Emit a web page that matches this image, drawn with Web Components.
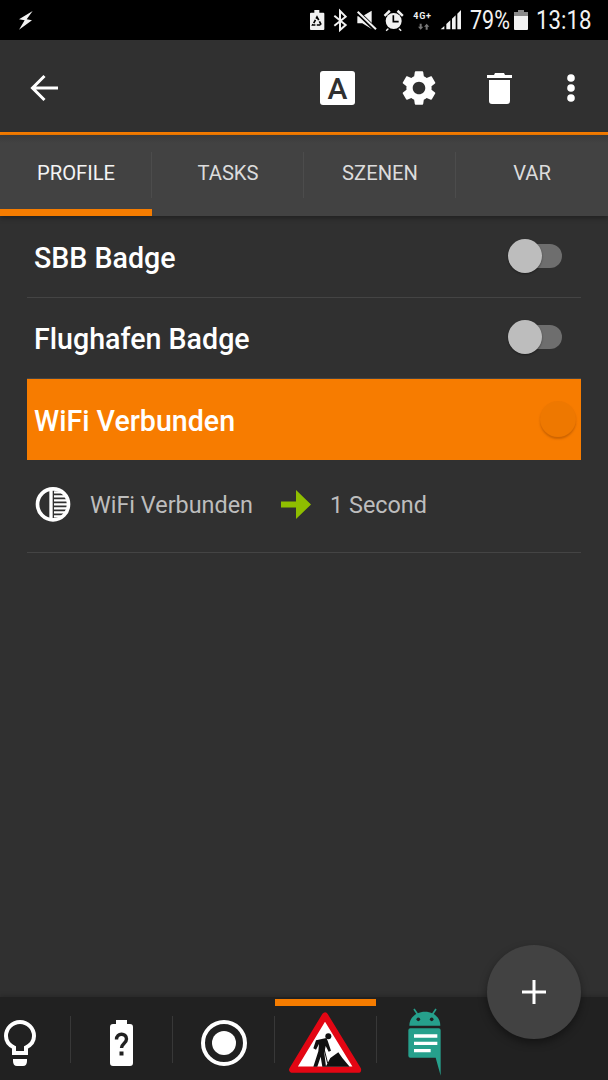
<!DOCTYPE html>
<html>
<head>
<meta charset="utf-8">
<style>
  html, body { margin: 0; padding: 0; background: #303030; }
  body { font-family: Roboto, "Liberation Sans", sans-serif; }
</style>
</head>
<body>
<app-shell>
  <status-bar></status-bar>
  <action-bar></action-bar>
  <tab-bar>
    <tab-item active>PROFILE</tab-item>
    <tab-item>TASKS</tab-item>
    <tab-item>SZENEN</tab-item>
    <tab-item last>VAR</tab-item>
  </tab-bar>
  <profile-list>
    <profile-row>SBB Badge</profile-row>
    <profile-row>Flughafen Badge</profile-row>
    <profile-row selected>WiFi Verbunden</profile-row>
    <context-row state="WiFi Verbunden" task="1 Second"></context-row>
  </profile-list>
  <project-dock></project-dock>
  <fab-button></fab-button>
</app-shell>

<script>
class AppShell extends HTMLElement {
  constructor() {
    super();
    this.attachShadow({ mode: 'open' });
    this.shadowRoot.innerHTML = `
      <style>
        :host {
          display: flex;
          flex-direction: column;
          position: relative;
          width: 608px;
          height: 1080px;
          overflow: hidden;
          background: #303030;
        }
      </style>
      <slot></slot>
    `;
  }
}

class StatusBar extends HTMLElement {
  constructor() {
    super();
    this.attachShadow({ mode: 'open' });
    this.shadowRoot.innerHTML = `
      <style>
        :host {
          display: flex;
          align-items: center;
          flex: none;
          height: 40px;
          padding: 0 19px 0 10px;
          background: #000;
          color: #f2f2f2;
          font-size: 25px;
        }
        svg { display: block; flex: none; fill: #f2f2f2; }
        .spacer { flex: 1; }
        .pct, .clock {
          display: block;
          flex: none;
          white-space: nowrap;
          transform-origin: left center;
        }
        .pct { margin-left: 5px; width: 39px; transform: scaleX(.86); }
        .clock { margin-left: 8px; width: 53px; transform: scaleX(.89); }
        text { font-family: Roboto, sans-serif; font-weight: 700; font-size: 27px; letter-spacing: 2px; fill: #f2f2f2; }
      </style>
      <svg width="40" height="30" viewBox="0 0 120 90"><path d="M68 18 27 43l17 3-17 28 39-28-16-3z"/></svg>
      <div class="spacer"></div>
      <svg width="160" height="30" viewBox="305 5 160 30"><g transform="translate(305 5) scale(.33333)">
        <path d="M28 15h15v8h12q3 0 3 3v46q0 3-3 3H18q-3 0-3-3V26q0-3 3-3h10z"/>
        <path fill="none" stroke="#000" stroke-width="5" stroke-dasharray="11 4" d="M36 36 49 60H23z"/>
        <path fill="none" stroke="#f2f2f2" stroke-width="6" d="M88 32 122 60 105 75V18L122 35 88 62"/>
        <path d="M157 34h15l28-17v55L172 55h-15z"/>
        <path stroke="#000" stroke-width="13" d="M150 14 214 76"/>
        <path stroke="#f2f2f2" stroke-width="6" d="M158 20 213 73"/>
        <path d="M236 30 252 14l5 6-16 15zM296 30 280 14l-5 6 16 15z"/>
        <circle cx="266" cy="48" r="24"/>
        <path d="M248 70l-6 6 3 3 7-7zM284 70l6 6-3 3-7-7z"/>
        <path fill="none" stroke="#000" stroke-width="5" d="M265 31V50H281"/>
        <text x="325" y="42">4G+</text>
        <path fill="#777" d="M344 56h6v9h5l-8 9-8-9h5zM365 56l8 9h-5v9h-6v-9h-5z"/>
        <path d="M407 73 418 63V73zM424 57 436 46V73H424zM441 41 452 31V73H441zM457 26 468 15V73H457z"/>
      </g></svg>
      <span class="pct">79%</span>
      <svg style="margin-left:5px" width="14" height="20" viewBox="0 0 14 20"><path fill="#8a8a8a" d="M4 0h6v2h4v4H0V2h4z"/><path d="M0 6h14v13q0 1-1 1H1q-1 0-1-1z"/></svg>
      <span class="clock">13:18</span>
    `;
  }
}

class ActionBar extends HTMLElement {
  constructor() {
    super();
    this.attachShadow({ mode: 'open' });
    this.shadowRoot.innerHTML = `
      <style>
        :host {
          display: flex;
          align-items: center;
          flex: none;
          box-sizing: border-box;
          height: 95px;
          padding: 4px 33px 0 30px;
          background: #303030;
          border-bottom: 3px solid #f57c00;
        }
        svg { display: block; flex: none; fill: #fff; }
        .spacer { flex: 1; }
        .letter {
          display: flex;
          align-items: center;
          justify-content: center;
          flex: none;
          width: 35px;
          height: 34px;
          border-radius: 3px;
          background: #fff;
          color: #303030;
          font-size: 30px;
          font-weight: 500;
        }
      </style>
      <svg width="28" height="28" viewBox="0 0 28 28"><path fill="none" stroke="#fff" stroke-width="3" d="M28 14H3M14.500 2 2.500 14l12 12"/></svg>
      <div class="spacer"></div>
      <div class="letter">A</div>
      <svg style="margin-left:43px" width="42" height="42" viewBox="0 0 24 24"><path d="M19.140 12.940c.04-.3.06-.61.06-.94 0-.32-.02-.64-.07-.94l2.030-1.580c.18-.14.23-.41.12-.61l-1.920-3.320c-.12-.22-.37-.29-.59-.22l-2.390.96c-.5-.38-1.030-.7-1.620-.94l-.36-2.540c-.04-.24-.24-.41-.48-.41h-3.840c-.24 0-.43.17-.47.41l-.36 2.540c-.59.24-1.130.57-1.620.94l-2.390-.96c-.22-.08-.47 0-.59.22L2.740 8.870c-.12.21-.08.47.12.61l2.030 1.580c-.05.3-.09.63-.09.94s.02.64.07.94l-2.030 1.580c-.18.14-.23.41-.12.61l1.920 3.320c.12.22.37.29.59.22l2.390-.96c.5.38 1.030.7 1.620.94l.36 2.540c.05.24.24.41.48.41h3.840c.24 0 .44-.17.47-.41l.36-2.540c.59-.24 1.130-.56 1.620-.94l2.390.96c.22.08.47 0 .59-.22l1.920-3.320c.12-.22.07-.47-.12-.61l-2.010-1.580zM12 15.600c-1.980 0-3.600-1.620-3.600-3.600s1.620-3.600 3.600-3.600 3.600 1.620 3.600 3.600-1.620 3.600-3.600 3.600z"/></svg>
      <svg style="margin-left:47px" width="25" height="31" viewBox="0 0 25 31"><path d="M8 0h9l1 2h7v3H0V2h7zM2 7h21v21q0 3-3 3H5q-3 0-3-3z"/></svg>
      <svg style="margin-left:55px" width="8" height="28" viewBox="0 0 8 28"><circle cx="4" cy="4" r="3.800"/><circle cx="4" cy="14" r="3.800"/><circle cx="4" cy="24" r="3.800"/></svg>
    `;
  }
}

class TabBar extends HTMLElement {
  constructor() {
    super();
    this.attachShadow({ mode: 'open' });
    this.shadowRoot.innerHTML = `
      <style>
        :host {
          display: flex;
          flex: none;
          height: 81px;
          background: linear-gradient(#3a3a3a, #424242 8px);
          box-shadow: 0 2px 5px rgba(0,0,0,.35);
          position: relative;
        }
      </style>
      <slot></slot>
    `;
  }
}

class TabItem extends HTMLElement {
  constructor() {
    super();
    this.attachShadow({ mode: 'open' });
    const active = this.hasAttribute('active');
    const last = this.hasAttribute('last');
    this.shadowRoot.innerHTML = `
      <style>
        :host {
          display: flex;
          align-items: center;
          justify-content: center;
          box-sizing: border-box;
          position: relative;
          width: 152px;
          padding-bottom: 5px;
          color: ${active ? '#f4f4f4' : '#dcdcdc'};
          font-size: 20.2px;
        }
        .line {
          position: absolute;
          right: 0;
          top: 17px;
          height: 46px;
          border-right: 1px solid #4c4c4c;
          display: ${last ? 'none' : 'block'};
        }
        .bar {
          position: absolute;
          left: 0;
          right: 0;
          bottom: 0;
          height: 7px;
          background: #f57c00;
          display: ${active ? 'block' : 'none'};
        }
      </style>
      <slot></slot>
      <div class="line"></div>
      <div class="bar"></div>
    `;
  }
}

class ProfileList extends HTMLElement {
  constructor() {
    super();
    this.attachShadow({ mode: 'open' });
    this.shadowRoot.innerHTML = `
      <style>
        :host {
          display: flex;
          flex-direction: column;
          flex: 1;
          min-height: 0;
          padding: 0 27px;
        }
      </style>
      <slot></slot>
    `;
  }
}

class ProfileRow extends HTMLElement {
  constructor() {
    super();
    this.attachShadow({ mode: 'open' });
    const selected = this.hasAttribute('selected');
    this.shadowRoot.innerHTML = `
      <style>
        :host {
          display: flex;
          align-items: center;
          justify-content: space-between;
          flex: none;
          box-sizing: border-box;
          height: ${selected ? '81px' : '81.5px'};
          padding: 3px ${selected ? '3px' : '19px'} 0 7px;
          ${selected ? 'background: #f77c00;' : 'border-bottom: 1px solid #444;'}
          color: #fff;
          font-size: 28.6px;
          font-weight: 500;
        }
        .track {
          position: relative;
          box-sizing: border-box;
          width: 52px;
          height: 24px;
          border-radius: 12px;
          margin-top: -4px;
          background: ${selected ? 'transparent' : '#6e6e6e'};
        }
        .thumb {
          position: absolute;
          top: 50%;
          transform: translateY(-50%);
          border-radius: 50%;
        }
        .off {
          left: -2px;
          width: 34px;
          height: 34px;
          background: #bdbdbd;
          box-shadow: 0 1px 2px rgba(0,0,0,.4);
        }
        .on {
          right: 2px;
          width: 36px;
          height: 36px;
          background: #ee7800;
          box-shadow: 0 2px 2px rgba(170,80,0,.55);
        }
      </style>
      <slot></slot>
      <div class="track"><div class="thumb ${selected ? 'on' : 'off'}"></div></div>
    `;
  }
}

class ContextRow extends HTMLElement {
  constructor() {
    super();
    this.attachShadow({ mode: 'open' });
    this.shadowRoot.innerHTML = `
      <style>
        :host {
          display: flex;
          align-items: center;
          flex: none;
          box-sizing: border-box;
          height: 93px;
          padding: 0 0 3px 1px;
          border-bottom: 1px solid #444;
          color: #bdbdbd;
          font-size: 23.4px;
        }
        svg { display: block; flex: none; }
        .state { margin-left: 12px; }
        .arrow { margin-left: 28px; }
        .task { margin-left: 19px; }
      </style>
      <svg width="50" height="46" viewBox="0 0 150 138">
        <circle cx="75" cy="67" r="46.500" fill="#303030" stroke="#fff" stroke-width="11"/>
        <rect x="64" y="18" width="10" height="98" fill="#fff"/>
        <path stroke="#fff" stroke-width="6.500" d="M78 31h24M78 43h36M78 55h43M78 67h45M78 79h43M78 91h36M78 103h24"/>
      </svg>
      <span class="state">${this.getAttribute('state')}</span>
      <svg class="arrow" width="30" height="29" viewBox="0 0 30 29"><path fill="#8fbe00" d="M0 11.500h15V0l15 14.500L15 29V17.500H0z"/></svg>
      <span class="task">${this.getAttribute('task')}</span>
    `;
  }
}

class ProjectDock extends HTMLElement {
  constructor() {
    super();
    this.attachShadow({ mode: 'open' });
    this.shadowRoot.innerHTML = `
      <style>
        :host {
          display: grid;
          grid-template-columns: 71px 102px 102px 102px 102px;
          flex: none;
          height: 83px;
          background: #212121;
          box-shadow: 0 -2px 4px rgba(0,0,0,.15);
        }
        .cell {
          display: flex;
          align-items: flex-start;
          justify-content: flex-start;
          position: relative;
          box-sizing: border-box;
          height: 83px;
        }
        .cell::after {
          content: "";
          position: absolute;
          right: 0;
          top: 19px;
          height: 47px;
          border-right: 1px solid #383838;
        }
        .cell:last-child::after { display: none; }
        .cur::before {
          content: "";
          position: absolute;
          left: 0;
          right: 1px;
          top: 2px;
          height: 7px;
          background: #f57c00;
        }
        svg { display: block; flex: none; }
      </style>
      <div class="cell" style="padding:23px 0 0 4px">
        <svg width="32" height="46" viewBox="0 0 32 46">
          <path fill="none" stroke="#fff" stroke-width="4" d="M10 33V27.500C5 25 2 21 2 16a14 14 0 0 1 28 0c0 5-3 9-8 11.500V33z"/>
          <path fill="#fff" d="M9 39h14v2q0 5-4 5h-6q-4 0-4-5z"/>
        </svg>
      </div>
      <div class="cell" style="padding:23px 0 0 39px">
        <svg width="23" height="46" viewBox="0 0 23 46">
          <path fill="#fff" d="M6 0h11v4h3q3 0 3 3v36q0 3-3 3H3q-3 0-3-3V7q0-3 3-3h3z"/>
          <path fill="none" stroke="#212121" stroke-width="3.400" d="M6.500 19.500c0-7 10-7 10-.5 0 4.500-5 4.500-5 9"/>
          <rect x="9.500" y="31.500" width="4" height="4" fill="#212121"/>
        </svg>
      </div>
      <div class="cell" style="padding:23px 0 0 28px">
        <svg width="46" height="46" viewBox="0 0 46 46">
          <circle cx="23" cy="23" r="21" fill="none" stroke="#fff" stroke-width="4"/>
          <circle cx="23" cy="23" r="12" fill="#fff"/>
        </svg>
      </div>
      <div class="cell cur" style="padding:11px 0 0 10px">
        <svg width="80" height="70" viewBox="0 0 240 210">
          <path fill="#fff" stroke="#e30613" stroke-width="19" stroke-linejoin="round" d="M120 23 22 185H219z"/>
          <circle cx="130" cy="85" r="9" fill="#111"/>
          <path fill="#111" d="M93 97 124 90 128 98 138 128 131 131 122 114 118 135 123 176H112L107 146 97 176H85L100 130 102 108 93 125 85 121z"/>
          <path stroke="#111" stroke-width="3" d="M117 122 128 166"/>
          <path fill="#111" d="M122 176 136 150 160 133 172 150 194 176z"/>
        </svg>
      </div>
      <div class="cell" style="padding:8px 0 0 23px">
        <svg width="50" height="75" viewBox="0 0 150 225">
          <path stroke="#26a08c" stroke-width="5" d="M42 12 54 30M108 12 96 30"/>
          <path fill="#26a08c" d="M28 62C28 36 50 20 75 20s46 16 46 42z"/>
          <circle cx="55" cy="43" r="5.500" fill="#212121"/><circle cx="95" cy="43" r="5.500" fill="#212121"/>
          <path fill="#26a08c" d="M31 70h85q6 0 6 6V212L107 158H31q-6 0-6-6V76q0-6 6-6z"/>
          <path fill="#fff" d="M42 88h70v10H42zM42 110h70v10H42zM42 132h50v10H42z"/>
        </svg>
      </div>
    `;
  }
}

class FabButton extends HTMLElement {
  constructor() {
    super();
    this.attachShadow({ mode: 'open' });
    this.shadowRoot.innerHTML = `
      <style>
        :host {
          display: flex;
          align-items: center;
          justify-content: center;
          position: absolute;
          left: 487px;
          top: 945px;
          width: 94px;
          height: 94px;
          border-radius: 50%;
          background: #424242;
          box-shadow: 0 4px 8px rgba(0,0,0,.4);
        }
      </style>
      <svg width="24" height="24" viewBox="0 0 24 24"><path stroke="#fff" stroke-width="3" d="M12 0v24M0 12h24"/></svg>
    `;
  }
}

customElements.define('app-shell', AppShell);
customElements.define('status-bar', StatusBar);
customElements.define('action-bar', ActionBar);
customElements.define('tab-bar', TabBar);
customElements.define('tab-item', TabItem);
customElements.define('profile-list', ProfileList);
customElements.define('profile-row', ProfileRow);
customElements.define('context-row', ContextRow);
customElements.define('project-dock', ProjectDock);
customElements.define('fab-button', FabButton);
</script>
</body>
</html>
